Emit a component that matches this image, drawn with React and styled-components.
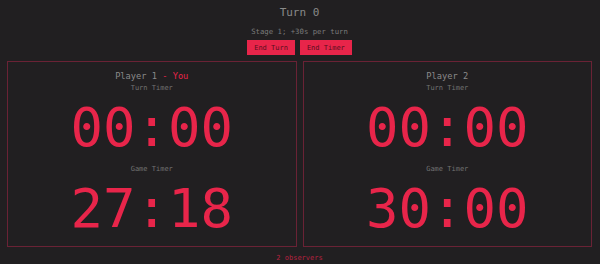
import React from 'react'
import styled, { createGlobalStyle } from 'styled-components'

const GlobalStyle = createGlobalStyle`
    html, body {
        margin: 0;
        padding: 0;
        background-color: #211f21;
    }
    body {
        font-family: "DejaVu Sans Mono", "Liberation Mono", monospace;
        color: #8a8a8a;
    }
`

const Page = styled.div`
    width: 600px;
    height: 264px;
    padding: 0 8px 0 7px;
    box-sizing: border-box;
    display: flex;
    flex-direction: column;
    align-items: center;
`

const Title = styled.h1`
    margin: 6px 0 0;
    font-size: 11px;
    line-height: 14px;
    font-weight: normal;
    color: #8a8a8a;
`

const Stage = styled.p`
    margin: 7px 0 0;
    font-size: 7.3px;
    line-height: 9px;
    color: #7a7a7a;
`

const Buttons = styled.div`
    display: flex;
    gap: 5px;
    margin-top: 4px;
`

const Button = styled.button`
    background-color: #e8254a;
    color: #5a0f1e;
    border: none;
    border-radius: 0;
    font-family: inherit;
    font-size: 7px;
    height: 15px;
    padding: 0 7px;
    cursor: pointer;
`

const Boards = styled.div`
    display: grid;
    grid-template-columns: 1fr 1fr;
    gap: 6px;
    width: 100%;
    margin-top: 6px;
`

const Board = styled.div`
    height: 186px;
    box-sizing: border-box;
    border: 1px solid #6a2235;
    display: flex;
    flex-direction: column;
    align-items: center;
    padding-top: 9px;
`

const PlayerName = styled.h2`
    margin: 0;
    font-size: 8.7px;
    line-height: 11px;
    font-weight: normal;
    color: #8a8a8a;

    span {
        color: #e8254a;
    }
`

const Label = styled.div`
    margin-top: ${p => p.$top}px;
    font-size: 7px;
    line-height: 9px;
    color: #727272;
`

const Clock = styled.div`
    margin-top: ${p => p.$top}px;
    font-size: 54px;
    line-height: 54px;
    color: #e8254a;
`

const Observers = styled.div`
    margin-top: 7px;
    font-size: 7px;
    line-height: 9px;
    color: #b52240;
`

const PlayerBoard = ({ name, you, turn, game }) => (
    <Board>
        <PlayerName>
            {name}
            {you && <span> - You</span>}
        </PlayerName>
        <Label $top={2}>Turn Timer</Label>
        <Clock $top={8}>{turn}</Clock>
        <Label $top={10}>Game Timer</Label>
        <Clock $top={8}>{game}</Clock>
    </Board>
)

const App = () => {
    return (
        <>
            <GlobalStyle />
            <Page>
                <Title>Turn 0</Title>
                <Stage>Stage 1; +30s per turn</Stage>
                <Buttons>
                    <Button>End Turn</Button>
                    <Button>End Timer</Button>
                </Buttons>
                <Boards>
                    <PlayerBoard name="Player 1" you turn="00:00" game="27:18" />
                    <PlayerBoard name="Player 2" turn="00:00" game="30:00" />
                </Boards>
                <Observers>2 observers</Observers>
            </Page>
        </>
    )
}

export default App
